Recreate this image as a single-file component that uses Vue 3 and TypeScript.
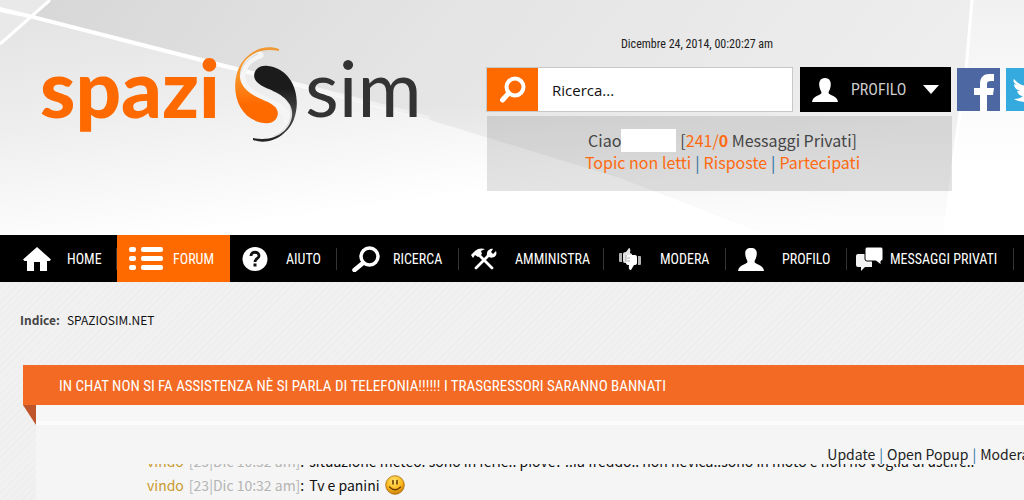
<script setup lang="ts">
import { ref } from 'vue'

interface NavItem {
  label: string
  icon: string
  active?: boolean
}

interface ChatLine {
  user: string
  time: string
  text: string
  smile?: boolean
}

const search = ref('Ricerca...')

const navItems: NavItem[] = [
  { label: 'HOME', icon: 'home' },
  { label: 'FORUM', icon: 'list', active: true },
  { label: 'AIUTO', icon: 'help' },
  { label: 'RICERCA', icon: 'lens' },
  { label: 'AMMINISTRA', icon: 'tools' },
  { label: 'MODERA', icon: 'thumbs' },
  { label: 'PROFILO', icon: 'person' },
  { label: 'MESSAGGI PRIVATI', icon: 'bubbles' },
]

const chatLines: ChatLine[] = [
  {
    user: 'vindo',
    time: '[23|Dic 10:32 am]',
    text: 'situazione meteo: sono in ferie.. piove? ..fa freddo.. non nevica..sono in moto e non ho voglia di uscire..',
  },
  { user: 'vindo', time: '[23|Dic 10:32 am]', text: 'Tv e panini', smile: true },
]
</script>

<template>
  <div class="page">
    <header class="header">
      <svg class="backdrop" viewBox="0 0 1024 235" preserveAspectRatio="none" aria-hidden="true">
        <defs>
          <linearGradient id="upper" x1="0" y1="0" x2="1" y2="0.2">
            <stop offset="0" stop-color="#d6d6d6" />
            <stop offset="0.45" stop-color="#e4e4e4" />
            <stop offset="1" stop-color="#eeeeee" />
          </linearGradient>
          <linearGradient id="upperFade" x1="0" y1="0" x2="0" y2="1">
            <stop offset="0.45" stop-color="#fff" stop-opacity="0" />
            <stop offset="1" stop-color="#fff" stop-opacity="0.95" />
          </linearGradient>
          <linearGradient id="lower" x1="0" y1="0" x2="0.55" y2="0.9">
            <stop offset="0" stop-color="#e2e2e2" />
            <stop offset="0.45" stop-color="#eeeeee" />
            <stop offset="0.9" stop-color="#ffffff" />
          </linearGradient>
          <linearGradient id="side" x1="0" y1="0" x2="0" y2="1">
            <stop offset="0" stop-color="#f1f1f1" />
            <stop offset="0.7" stop-color="#ffffff" />
          </linearGradient>
          <linearGradient id="beam" x1="0" y1="0" x2="1" y2="0">
            <stop offset="0.5" stop-color="#fff" />
            <stop offset="1" stop-color="#fff" stop-opacity="0.3" />
          </linearGradient>
        </defs>
        <rect width="1024" height="235" fill="url(#lower)" />
        <path d="M0 0H972L966 70L942 235H770L620 178L430 120L29 16L0 8Z" fill="url(#upper)" />
        <path d="M0 0H972L966 70L942 235H770L620 178L430 120L29 16L0 8Z" fill="url(#upperFade)" />
        <path d="M972 0H1024V235H942L966 70Z" fill="url(#side)" />
        <path d="M0 0H50L0 44Z" fill="#e9e9e9" />
        <path d="M0 7L29 14L430 116V121L29 18L0 12Z" fill="url(#beam)" />
        <path d="M50 0L0 44" stroke="#fff" stroke-width="3" />
        <path d="M972 0L966 70L952 170" fill="none" stroke="#fff" stroke-width="3" />
      </svg>

      <a class="logo" href="#" aria-label="spaziosim">
        <svg viewBox="0 0 400 125" width="400" height="125">
          <defs>
            <linearGradient id="flame" x1="0" y1="0" x2="0" y2="1">
              <stop offset="0" stop-color="#ee9a35" />
              <stop offset="0.4" stop-color="#f99327" />
              <stop offset="0.75" stop-color="#ff6a00" />
            </linearGradient>
            <linearGradient id="ink" x1="0" y1="0" x2="0" y2="1">
              <stop offset="0.3" stop-color="#1b1b1b" />
              <stop offset="0.65" stop-color="#4a4a4a" />
              <stop offset="1" stop-color="#222" />
            </linearGradient>
          </defs>
          <text class="logo-main" x="10" y="88">spazi</text>
          <path
            d="M230 25C215 30 208 43 214 55C222 69 248 71 256 84C262 97 251 106 238 107"
            fill="none" stroke="#f5f5f5" stroke-width="7" stroke-linecap="round"
          />
          <path
            d="M228 24C214 29 206 44 211 56M260 76C264 88 257 101 244 106"
            fill="none" stroke="#d5d5d5" stroke-width="1"
          />
          <path
            d="M249 19C232 13 214 24 208 40C200 62 209 90 234 93C247 95 252 82 244 76C236 69 220 68 212 54C204 39 219 15 249 21Z"
            fill="url(#flame)"
          />
          <path
            d="M223 110C240 116 258 105 264 89C272 67 263 39 238 36C225 34 220 47 228 53C236 60 252 61 260 75C268 90 253 114 223 108Z"
            fill="url(#ink)"
          />
          <text class="logo-side" x="275" y="87">sim</text>
        </svg>
      </a>

      <div class="tools">
        <time class="date">Dicembre 24, 2014, 00:20:27 am</time>
        <div class="controls">
          <form class="search" @submit.prevent>
            <button class="search-button" type="submit" aria-label="Cerca">
              <svg viewBox="0 0 28 28" width="28" height="28">
                <circle cx="16" cy="11" r="8.500" fill="none" stroke="#fff" stroke-width="4" />
                <path d="M9.500 17.500L3.500 24" stroke="#fff" stroke-width="5" stroke-linecap="round" />
              </svg>
            </button>
            <input v-model="search" class="search-input" type="text" aria-label="Ricerca" />
          </form>
          <button class="profile" type="button">
            <svg viewBox="0 0 26 24" width="26" height="24">
              <path d="M13 0C18 0 19.500 4 18.500 9C18 12 16.500 13 16.500 15C17 17 25.500 18 26 24H0C.5 18 9 17 9.500 15C9.500 13 8 12 7.500 9C6.500 4 8 0 13 0Z" fill="#fff" />
            </svg>
            <span class="profile-label">PROFILO</span>
            <svg viewBox="0 0 16 9" width="16" height="9"><path d="M0 0H16L8 9Z" fill="#fff" /></svg>
          </button>
          <a class="social facebook" href="#" aria-label="Facebook">
            <svg viewBox="0 0 43 43" width="43" height="43">
              <path d="M23 43V27H17V20H23V16C23 9 27 6 32 6H37V13H34C31 13 30 14 30 16V20H37L36 27H30V43Z" fill="#fff" />
            </svg>
          </a>
          <a class="social twitter" href="#" aria-label="Twitter">
            <svg viewBox="0 0 43 43" width="43" height="43">
              <path d="M8 11C12 16 17 18 22 18C21 13 25 9 29 9C32 9 34 10 35 12L39 10L37 14L40 13L37 17C37 27 30 34 20 34C15 34 11 33 8 31C12 31 15 30 17 28C14 28 12 26 11 23H14C10 22 8 19 8 16L11 17C7 15 7 12 8 11Z" fill="#fff" />
            </svg>
          </a>
        </div>
        <div class="welcome">
          <p><span>Ciao</span><span class="username"></span><span>[<a href="#">241/<b>0</b></a> Messaggi Privati]</span></p>
          <p class="welcome-links">
            <a href="#">Topic non letti</a><i>|</i><a href="#">Risposte</a><i>|</i><a href="#">Partecipati</a>
          </p>
        </div>
      </div>
    </header>

    <nav class="nav">
      <a v-for="item in navItems" :key="item.label" href="#" class="nav-item" :class="['nav-' + item.icon, { active: item.active }]">
        <span class="icon-box">
          <svg v-if="item.icon === 'home'" viewBox="0 0 28 24" width="28" height="24">
            <path d="M14 0L28 12.500L26.500 14H24V24H17V15H11V24H4V14H1.500L0 12.500Z" fill="#fff" />
          </svg>
          <svg v-else-if="item.icon === 'list'" viewBox="0 0 34 24" width="34" height="24">
            <g fill="#fff">
              <rect width="7" height="5" rx="2" /><rect x="12" width="22" height="5" rx="2" />
              <rect y="9" width="7" height="5" rx="2" /><rect x="12" y="9" width="22" height="5" rx="2" />
              <rect y="18" width="7" height="5" rx="2" /><rect x="12" y="18" width="22" height="5" rx="2" />
            </g>
          </svg>
          <svg v-else-if="item.icon === 'help'" viewBox="0 0 26 24" width="26" height="24">
            <ellipse cx="13" cy="12" rx="12.500" ry="12" fill="#fff" />
            <path d="M9 9C9 4 17 4 17 9C17 11.500 13 11.500 13 15" fill="none" stroke="#111" stroke-width="2.800" />
            <rect x="11.500" y="16.500" width="3" height="3" fill="#111" />
          </svg>
          <svg v-else-if="item.icon === 'lens'" viewBox="0 0 28 26" width="28" height="26">
            <circle cx="17.500" cy="10.500" r="8.500" fill="none" stroke="#fff" stroke-width="3.500" />
            <path d="M11 17L2.500 24" stroke="#fff" stroke-width="4.500" stroke-linecap="round" />
          </svg>
          <svg v-else-if="item.icon === 'tools'" viewBox="0 0 26 22" width="26" height="22">
            <path d="M8 7L21 20M5 20L18 7" stroke="#fff" stroke-width="2.800" stroke-linecap="round" />
            <path d="M0 7L4 3C7 0 11 0 14 1L10 3L11 6L7 9L4 7L2 10Z" fill="#fff" />
            <path d="M16 8C15 3 19 0 22 1L20 4L22 6L25 3C27 8 22 11 18 9Z" fill="#fff" />
          </svg>
          <svg v-else-if="item.icon === 'thumbs'" viewBox="0 0 22 22" width="22" height="22">
            <path d="M4 6Q4 4 7 4L10 0Q12 0 11 5L13 6V13L10 15H6Q4 15 4 13Z" fill="#e4e4e4" />
            <path d="M9 7H16Q18 7 18 9V15Q18 17 15 17L12 22Q9 22 10 17Q7 17 7 15V9Q7 7 9 7Z" fill="#fff" />
            <path d="M0 6Q0 5 1 5H3V14H1Q0 14 0 13ZM19 8H21Q22 8 22 9V16Q22 17 21 17H19Z" fill="#b5b5b5" />
            <path d="M7 7V14M8 10H11M8 13H11" stroke="#999" stroke-width="0.800" />
          </svg>
          <svg v-else-if="item.icon === 'person'" viewBox="0 0 26 24" width="26" height="24">
            <path d="M13 1C18 1 19.500 4 18.500 9C18 12 16.500 13 16.500 15C17 17 25.500 18 26 24H0C.5 18 9 17 9.500 15C9.500 13 8 12 7.500 9C6.500 4 8 1 13 1Z" fill="#fff" />
          </svg>
          <svg v-else viewBox="0 0 27 24" width="27" height="24">
            <path d="M2 7H16V20H9L5 24V20H2Q0 20 0 18V9Q0 7 2 7Z" fill="#f2f2f2" />
            <path d="M11 0H25Q27 0 27 2V12Q27 14 25 14V18L20 14H11Q9 14 9 12V2Q9 0 11 0Z" fill="#fff" stroke="#000" stroke-width="1" />
          </svg>
        </span>
        <span class="nav-label">{{ item.label }}</span>
      </a>
    </nav>

    <main class="content">
      <p class="breadcrumb"><b>Indice:</b><a href="#">SPAZIOSIM.NET</a></p>

      <section class="shoutbox">
        <h2 class="shout-title">IN CHAT NON SI FA ASSISTENZA NÈ SI PARLA DI TELEFONIA!!!!!! I TRASGRESSORI SARANNO BANNATI</h2>
        <div class="shout-panel">
          <div class="shout-links">
            <a href="#">Update</a><i>|</i><a href="#">Open Popup</a><i>|</i><a href="#">Moderate</a>
          </div>
          <div class="chat">
            <ul class="chat-list">
              <li v-for="line in chatLines" :key="line.text">
                <a class="user" href="#">{{ line.user }}</a>
                <span><span class="stamp">{{ line.time }}</span>:</span>
                <span>{{ line.text }}</span>
                <svg v-if="line.smile" viewBox="0 0 20 20" width="20" height="20" role="img" aria-label="Smile">
                  <defs>
                    <radialGradient id="face" cx="0.45" cy="0.3" r="0.7">
                      <stop offset="0" stop-color="#ffe873" />
                      <stop offset="0.6" stop-color="#fcb91c" />
                      <stop offset="1" stop-color="#c87a08" />
                    </radialGradient>
                  </defs>
                  <circle cx="10" cy="10" r="9.300" fill="url(#face)" stroke="#a96c12" stroke-width="0.800" />
                  <path d="M8 5.500V9M12 5.500V9" stroke="#6b3d05" stroke-width="1.600" stroke-linecap="round" />
                  <path d="M4.500 12Q10 17.500 15.500 12" fill="none" stroke="#6b3d05" stroke-width="1.300" stroke-linecap="round" />
                </svg>
              </li>
            </ul>
          </div>
        </div>
      </section>
    </main>
  </div>
</template>

<style>
body {
  margin: 0;
  background: #f0f0f0;
}
</style>

<style scoped>
.page {
  min-height: 100vh;
  overflow: hidden;
  font-family: "Noto Sans CJK SC", "Open Sans", sans-serif;
  color: #444;
  background: repeating-linear-gradient(135deg, #f1f1f1 0 3px, #eeeeee 3px 5px);
}

a {
  color: inherit;
  text-decoration: none;
}

p,
h2,
ul {
  margin: 0;
  padding: 0;
}

i {
  font-style: normal;
  color: #2a6f9e;
}

button {
  border: 0;
  padding: 0;
  cursor: pointer;
}

svg {
  display: block;
  flex: none;
}

.header {
  position: relative;
  display: flex;
  gap: 56px;
  min-height: 235px;
  padding-left: 30px;
  box-sizing: border-box;
  overflow: hidden;
}

.backdrop {
  position: absolute;
  inset: 0;
  width: 100%;
  height: 100%;
}

.logo {
  position: relative;
  padding-top: 30px;
}

.logo-main {
  font: 900 80px Lato, sans-serif;
  fill: #ff6a00;
}

.logo-side {
  font: 400 78px Lato, sans-serif;
  fill: #333;
}

.tools {
  position: relative;
  display: grid;
  grid-template-columns: 466px;
  align-content: start;
  padding-top: 34px;
}

.date {
  padding-left: 135px;
  font: 12px/20px "Roboto Condensed", "Liberation Sans Narrow", "Liberation Sans", sans-serif;
  color: #222;
}

.controls {
  display: flex;
  align-items: center;
  margin-top: 13px;
}

.search {
  display: flex;
  flex: none;
  width: 307px;
  height: 45px;
  box-sizing: border-box;
  border: 1px solid #c8c8c8;
  background: #fff;
}

.search-button {
  display: grid;
  place-items: center;
  width: 51px;
  background: #ff6a00;
}

.search-input {
  flex: 1;
  min-width: 0;
  border: 0;
  padding: 0 14px;
  font: 15px "Open Sans", sans-serif;
  color: #111;
  background: #fff;
}

.profile {
  display: flex;
  flex: none;
  align-items: center;
  width: 151px;
  height: 45px;
  margin-left: 7px;
  padding: 0 12px;
  background: #000;
}

.profile-label {
  flex: 1;
  padding-left: 13px;
  text-align: left;
  font: 16px "Roboto Condensed", "Liberation Sans Narrow", "Liberation Sans", sans-serif;
  color: #ccc;
}

.social {
  margin-left: 6px;
}

.facebook {
  background: #4c67a1;
}

.twitter {
  background: #35aade;
}

.welcome {
  height: 75px;
  margin: 4px 0 0 1px;
  padding: 13px 0 0 6px;
  box-sizing: border-box;
  font-size: 16px;
  line-height: 22px;
  background: rgba(0, 0, 0, 0.11);
}

.welcome a {
  color: #ff6a10;
}

.welcome p {
  display: flex;
  justify-content: center;
  height: 22px;
}

.welcome .welcome-links {
  gap: 4px;
}

.username {
  width: 55px;
  height: 23px;
  margin-right: 4px;
  background: #fff;
}

.nav {
  display: grid;
  grid-template-columns: 117px 113px 107px 122px 145px 122px 121px 167px;
  grid-template-rows: 47px;
  background: #000;
}

.nav-item {
  display: flex;
  align-items: center;
  color: #fff;
  background: linear-gradient(#333, #333) right center / 1px 22px no-repeat;
  white-space: nowrap;
}

.nav-item.active {
  background: #ff6a00;
}

.icon-box {
  flex: none;
  box-sizing: border-box;
  width: 56px;
  padding-left: 12px;
}

.nav-home .icon-box {
  width: 67px;
  padding-left: 23px;
}

.nav-lens .icon-box,
.nav-thumbs .icon-box {
  padding-left: 15px;
}

.nav-bubbles .icon-box {
  width: 43px;
  padding-left: 9px;
}

.nav-label {
  font: 14px "Roboto Condensed", "Liberation Sans Narrow", "Liberation Sans", sans-serif;
}

.breadcrumb {
  display: flex;
  gap: 7px;
  padding: 28px 20px 0;
  font-size: 12px;
  line-height: 20px;
}

.breadcrumb a {
  color: #111;
}

.shoutbox {
  margin-top: 35px;
  padding-left: 23px;
}

.shout-title {
  position: relative;
  height: 40px;
  padding-left: 36px;
  font: 15px/42px "Roboto Condensed", "Liberation Sans Narrow", "Liberation Sans", sans-serif;
  white-space: nowrap;
  color: #fff;
  background: #f26a24;
}

.shout-title::after {
  content: "";
  position: absolute;
  left: 0;
  top: 100%;
  width: 13px;
  height: 20px;
  background: #bf552b;
  clip-path: polygon(0 0, 100% 0, 100% 100%);
}

.shout-panel {
  min-height: 95px;
  margin-left: 13px;
  padding-top: 38px;
  box-sizing: border-box;
  background: linear-gradient(#f7f7f7 0 16px, #fcfcfc 16px 20px, #f5f5f5 20px);
}

.shout-links {
  display: flex;
  justify-content: flex-end;
  gap: 4px;
  height: 21px;
  margin-right: -18px;
  font-size: 14px;
  line-height: 22px;
  white-space: nowrap;
  color: #222;
}

.chat {
  overflow: hidden;
  padding-left: 111px;
  font-size: 14px;
  line-height: 24px;
  color: #111;
}

.chat-list {
  margin-top: -15px;
  list-style: none;
}

.chat-list li {
  display: flex;
  align-items: center;
  gap: 5px;
  height: 24px;
  white-space: nowrap;
}

.user {
  color: #c99a2e;
}

.stamp {
  color: #b4b4b4;
}
</style>
